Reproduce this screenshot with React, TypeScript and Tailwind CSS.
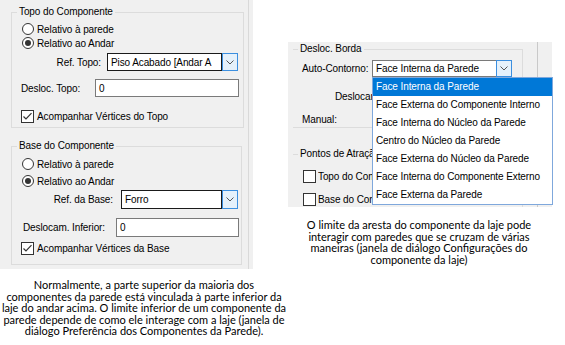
import React from "react";

const listItems = [
  "Face Interna da Parede",
  "Face Externa do Componente Interno",
  "Face Interna do Núcleo da Parede",
  "Centro do Núcleo da Parede",
  "Face Externa do Núcleo da Parede",
  "Face Interna do Componente Externo",
  "Face Externa da Parede",
];

function Radio({ checked }: { checked?: boolean }) {
  return (
    <svg width="12" height="12" viewBox="0 0 12 12" className="shrink-0">
      <circle cx="6" cy="6" r="5.5" fill="#fff" stroke="#333" />
      {checked && <circle cx="6" cy="6" r="3" fill="#333" />}
    </svg>
  );
}

function Check({ checked }: { checked?: boolean }) {
  return (
    <svg width="13" height="13" viewBox="0 0 13 13" className="shrink-0">
      <rect x="0.5" y="0.5" width="12" height="12" fill="#fff" stroke="#333" />
      {checked && <path d="M2.5 6.5 L5 9 L10.5 3.2" fill="none" stroke="#333" strokeWidth="1.2" />}
    </svg>
  );
}

function Chevron() {
  return (
    <svg width="8" height="5" viewBox="0 0 8 5">
      <path d="M0.5 0.5 L4 4 L7.5 0.5" fill="none" stroke="#555" />
    </svg>
  );
}

function Combo({ text, dark }: { text: string; dark?: boolean }) {
  return (
    <div className="flex h-full w-full">
      <div
        className={`flex-1 min-w-0 overflow-hidden whitespace-nowrap bg-white pl-[3px] flex items-center border ${
          dark ? "border-[#1a1a1a]" : "border-[#7a7a7a] border-r-0"
        }`}
      >
        {text}
      </div>
      <div className="w-[16px] shrink-0 border border-[#3c8fdf] bg-[#e5f1fb] flex items-center justify-center">
        <Chevron />
      </div>
    </div>
  );
}

function Legend({ children }: { children: React.ReactNode }) {
  return <legend className="ml-[5px] px-[2px] h-[14px] leading-[14px]">{children}</legend>;
}

export default function App() {
  return (
    <div className="relative w-[565px] h-[345px] overflow-hidden bg-white flex font-['Liberation_Sans',Arial,sans-serif] text-[10px] tracking-[-0.1px] text-black">
      {/* left dialog */}
      <div className="w-[288px] shrink-0 flex flex-col">
        <div className="w-[253px] h-[269px] bg-[#f0f0f0] flex">
          <div className="w-[249px] border-r border-[#d9d9d9] pt-[5px] pl-[11px]">
            <fieldset className="w-[233px] border border-[#dcdcdc] pb-[4px]">
              <Legend>Topo do Componente</Legend>
              <div className="mt-[3px] h-[14px] pl-[10px] flex items-center gap-[3px]">
                <Radio />
                <span>Relativo à parede</span>
              </div>
              <div className="h-[14px] pl-[10px] flex items-center gap-[3px]">
                <Radio checked />
                <span>Relativo ao Andar</span>
              </div>
              <div className="mt-[3px] h-[18px] flex items-center">
                <span className="w-[89px] text-right">Ref. Topo:</span>
                <div className="ml-[6px] w-[131px] h-full">
                  <Combo text="Piso Acabado [Andar A" dark />
                </div>
              </div>
              <div className="mt-[8px] h-[18px] pl-[9px] pr-[4px] flex items-center justify-between">
                <span>Desloc. Topo:</span>
                <div className="w-[144px] h-full bg-white border border-[#7a7a7a] pl-[3px] flex items-center">0</div>
              </div>
              <div className="mt-[12px] h-[14px] pl-[9px] flex items-center gap-[3px]">
                <Check checked />
                <span>Acompanhar Vértices do Topo</span>
              </div>
            </fieldset>

            <fieldset className="mt-[11px] w-[231px] border border-[#dcdcdc] pb-[9px]">
              <Legend>Base do Componente</Legend>
              <div className="mt-[4px] h-[14px] pl-[10px] flex items-center gap-[3px]">
                <Radio />
                <span>Relativo à parede</span>
              </div>
              <div className="mt-[3px] h-[14px] pl-[10px] flex items-center gap-[3px]">
                <Radio checked />
                <span>Relativo ao Andar</span>
              </div>
              <div className="mt-[2px] h-[19px] flex items-center">
                <span className="w-[101px] text-right">Ref. da Base:</span>
                <div className="ml-[8px] w-[117px] h-full">
                  <Combo text="Forro" dark />
                </div>
              </div>
              <div className="mt-[9px] h-[19px] pl-[11px] pr-[2px] flex items-center justify-between">
                <span>Deslocam. Inferior:</span>
                <div className="w-[123px] h-full bg-white border border-[#7a7a7a] pl-[3px] flex items-center">0</div>
              </div>
              <div className="mt-[4px] h-[14px] pl-[9px] flex items-center gap-[3px]">
                <Check checked />
                <span>Acompanhar Vértices da Base</span>
              </div>
            </fieldset>
          </div>
        </div>
        <p className="mt-[10px] w-[288px] text-center font-['Lato',sans-serif] text-[11px] tracking-normal leading-[11.5px]">
          Normalmente, a parte superior da maioria dos
          <br />
          componentes da parede está vinculada à parte inferior da
          <br />
          laje do andar acima. O limite inferior de um componente da
          <br />
          parede depende de como ele interage com a laje (janela de
          <br />
          diálogo Preferência dos Componentes da Parede).
        </p>
      </div>

      {/* right dialog */}
      <div className="flex-1 flex flex-col">
        <div className="mt-[42px] w-[264px] h-[165px] bg-[#f0f0f0] flex overflow-hidden">
          <div className="w-[250px] border-r border-[#c9c9c9] pl-[5px] whitespace-nowrap">
            <fieldset className="w-[230px] border border-l-0 border-[#dcdcdc]">
              <Legend>Desloc. Borda</Legend>
              <div className="mt-[4px] h-[17px] pl-[9px] flex items-center">
                <span className="w-[70px]">Auto-Contorno:</span>
                <div className="w-[140px] h-full">
                  <Combo text="Face Interna da Parede" />
                </div>
              </div>
              <div className="mt-[13px] h-[14px] ml-[42px] w-[37px] overflow-hidden leading-[14px]">Deslocamento:</div>
              <div className="mt-[9px] h-[14px] pl-[9px] leading-[14px]">Manual:</div>
            </fieldset>
            <fieldset className="mt-[19px] w-[230px] border border-l-0 border-[#dcdcdc] pb-[6px]">
              <Legend>Pontos de Atração</Legend>
              <div className="mt-[8px] h-[14px] pl-[10px] flex items-center gap-[2px]">
                <Check />
                <span className="w-[54px] overflow-hidden">Topo do Componente</span>
              </div>
              <div className="mt-[9px] h-[14px] pl-[10px] flex items-center gap-[2px]">
                <Check />
                <span className="w-[54px] overflow-hidden">Base do Componente</span>
              </div>
            </fieldset>
          </div>
        </div>
        <p className="mt-[12px] w-[262px] text-center font-['Lato',sans-serif] text-[11px] tracking-normal leading-[11.5px]">
          O limite da aresta do componente da laje pode
          <br />
          interagir com paredes que se cruzam de várias
          <br />
          maneiras (janela de diálogo Configurações do
          <br />
          componente da laje)
        </p>
      </div>

      {/* open dropdown list */}
      <ul className="absolute left-[372px] top-[77px] w-[181px] bg-white border border-[#7fa8dc]">
        {listItems.map((item, i) => (
          <li
            key={item}
            className={`h-[18px] leading-[18px] pl-[3px] whitespace-nowrap ${
              i === 0 ? "bg-[#0078d7] text-white" : ""
            }`}
          >
            {item}
          </li>
        ))}
      </ul>
    </div>
  );
}
